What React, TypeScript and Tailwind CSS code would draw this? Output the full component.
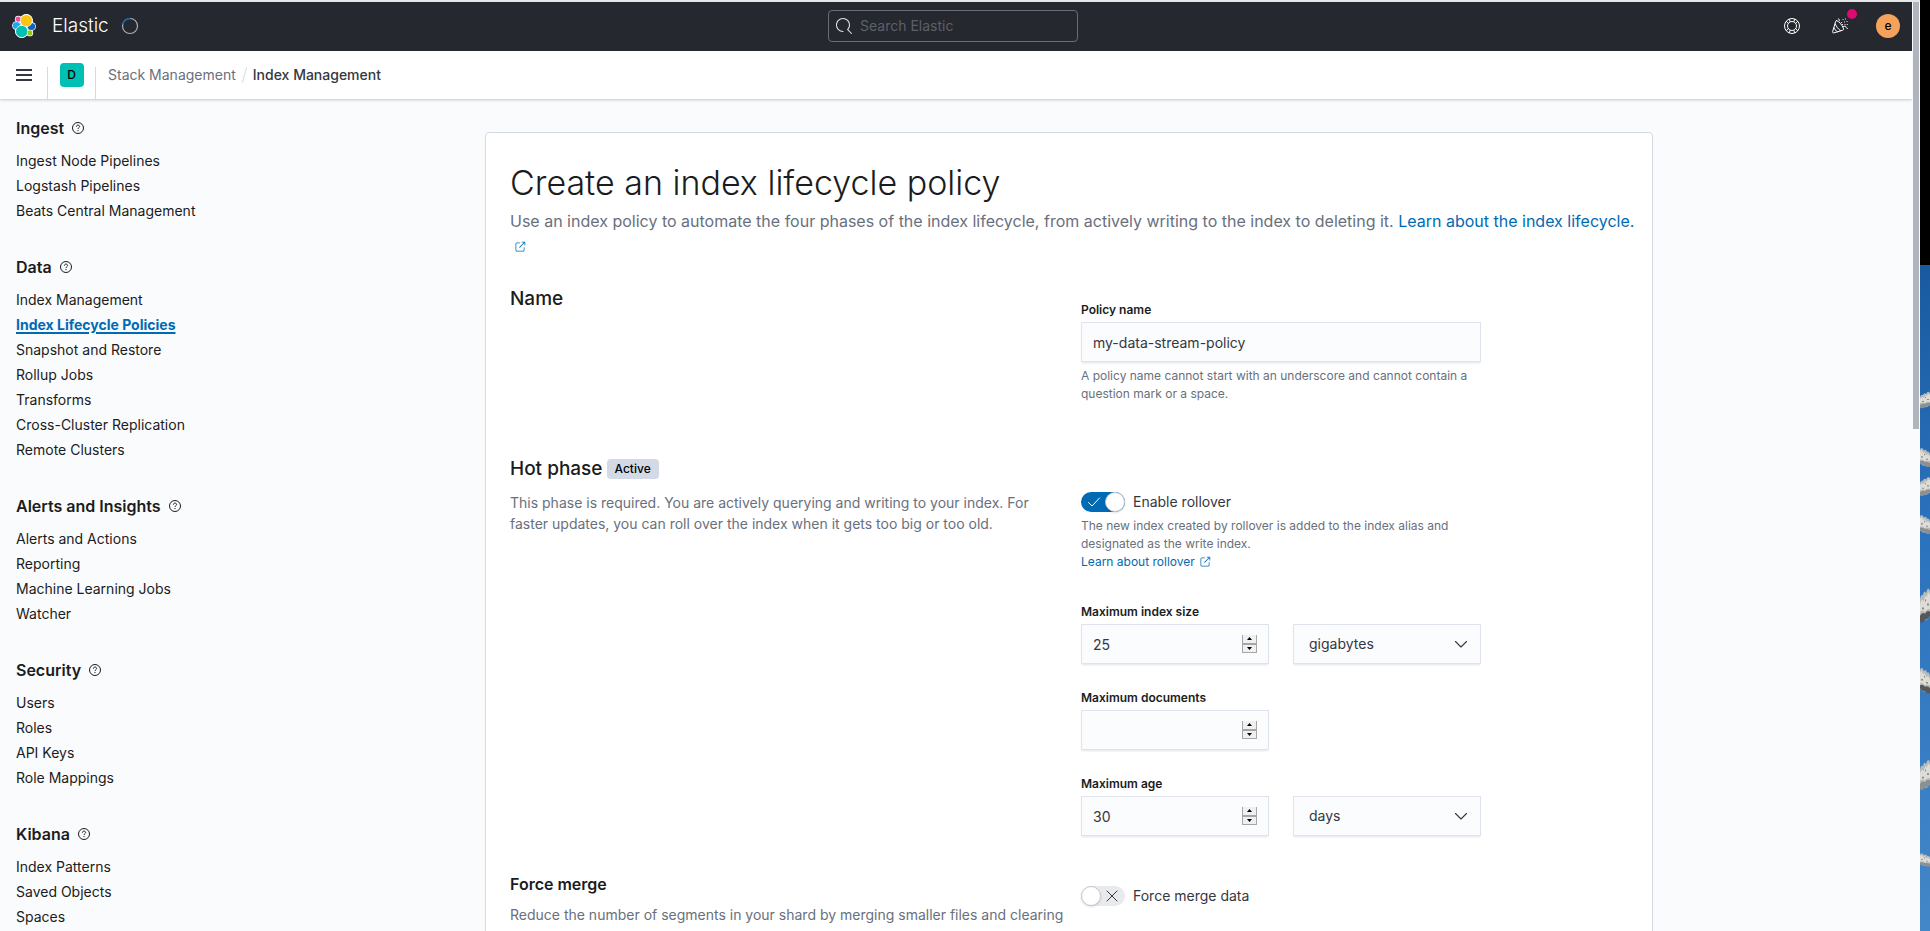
import React, { useId, useState } from 'react';

const NAV: { title: string; items: string[] }[] = [
  { title: 'Ingest', items: ['Ingest Node Pipelines', 'Logstash Pipelines', 'Beats Central Management'] },
  {
    title: 'Data',
    items: [
      'Index Management',
      'Index Lifecycle Policies',
      'Snapshot and Restore',
      'Rollup Jobs',
      'Transforms',
      'Cross-Cluster Replication',
      'Remote Clusters',
    ],
  },
  { title: 'Alerts and Insights', items: ['Alerts and Actions', 'Reporting', 'Machine Learning Jobs', 'Watcher'] },
  { title: 'Security', items: ['Users', 'Roles', 'API Keys', 'Role Mappings'] },
  { title: 'Kibana', items: ['Index Patterns', 'Saved Objects', 'Spaces'] },
];
const SELECTED = 'Index Lifecycle Policies';

function ElasticLogo() {
  return (
    <svg width="24" height="24" viewBox="0 0 24 24" aria-hidden="true">
      <g fill="#fff">
        <circle cx="14.3" cy="6.7" r="6.7" />
        <circle cx="9.7" cy="17.3" r="6.7" />
        <circle cx="6.3" cy="5.2" r="3.4" />
        <circle cx="4.5" cy="11.6" r="4.4" />
        <circle cx="19.5" cy="12.4" r="4.4" />
        <circle cx="17.8" cy="18.9" r="3.4" />
      </g>
      <circle cx="6.2" cy="5.1" r="2.6" fill="#f04e98" />
      <ellipse cx="4.5" cy="11.6" rx="3.7" ry="3.5" fill="#1ba9f5" />
      <ellipse cx="19.5" cy="12.4" rx="3.7" ry="3.5" fill="#0b64c0" />
      <circle cx="17.8" cy="18.9" r="2.6" fill="#93c90e" />
      <circle cx="14.3" cy="6.6" r="6.3" fill="#fff" />
      <circle cx="9.7" cy="17.4" r="6.3" fill="#fff" />
      <circle cx="14.3" cy="6.6" r="5.7" fill="#fec514" />
      <circle cx="9.7" cy="17.4" r="5.7" fill="#00bfb3" />
    </svg>
  );
}

function SearchIcon() {
  return (
    <svg width="16" height="16" viewBox="0 0 16 16" fill="#dfe5ef" aria-hidden="true">
      <path d="M11.271 11.978l3.872 3.873a.502.502 0 00.708 0 .502.502 0 000-.708l-3.565-3.564c2.38-2.747 2.267-6.923-.342-9.532-2.73-2.73-7.17-2.73-9.898 0-2.728 2.729-2.728 7.17 0 9.9a6.955 6.955 0 004.949 2.05.5.5 0 000-1 5.96 5.96 0 01-4.242-1.757 6.01 6.01 0 010-8.486 6.004 6.004 0 018.484 0 6.01 6.01 0 010 8.486.5.5 0 00.034.738z" />
    </svg>
  );
}

function HelpIcon() {
  return (
    <svg width="16" height="16" viewBox="0 0 16 16" fill="none" stroke="#fff" aria-hidden="true">
      <circle cx="8" cy="8" r="7.5" />
      <circle cx="8" cy="8" r="4.5" />
      <path d="M5.2 1.1 6.2 3.8M2.2 3.2 4.2 5.3M10.8 1.1 9.8 3.8M13.8 3.2 11.8 5.3M5.2 14.9 6.2 12.2M2.2 12.8 4.2 10.7M10.8 14.9 9.8 12.2M13.8 12.8 11.8 10.7" />
    </svg>
  );
}

function CheerIcon() {
  return (
    <svg width="16" height="16" viewBox="0 0 16 16" fill="none" stroke="#fff" strokeLinecap="round" strokeLinejoin="round" aria-hidden="true">
      <path d="M4.6 2.6c-.6 0-.8.3-.9.7L.6 13.7c-.2.8.4 1.4 1.2 1.2l9-2.7c1-.3 1.1-1 .5-2.2-1.5-3.3-4.2-6.8-6.7-7.4z" />
      <path d="M3.3 6c1.2 2.8 2.8 5.2 5.2 6.7M2.1 9.8c.7 1.7 1.8 3.2 3.2 4.1" />
      <path d="M6.3.8c1 .3 1.3 1 1 2M11.500 8.500c1.200-.7 2.500-.4 2.700.7.100.8.6 1.300 1.300 1.300" />
      <path d="M9.500 4.500l.1 0M11 1.500l.1 0M13.500 1l.1 0M12.500 4l.1 0M15 3.500l.1 0M10.500 6.500l.1 0M13 6.500l.1 0M15.200 6.500l.1 0" />
    </svg>
  );
}

function QuestionIcon() {
  return (
    <svg width="12" height="12" viewBox="0 0 12 12" fill="none" stroke="#1a1c21" aria-hidden="true">
      <circle cx="6" cy="6" r="5.5" />
      <path d="M4.400 4.700c0-1 .7-1.600 1.600-1.600s1.600.6 1.600 1.400c0 1.200-1.600 1.200-1.600 2.500" />
      <circle cx="6" cy="8.700" r=".35" fill="#1a1c21" strokeWidth="0.5" />
    </svg>
  );
}

function PopoutIcon() {
  return (
    <svg className="ml-1 inline-block align-[-2px]" width="12" height="12" viewBox="0 0 16 16" fill="#006bb4" role="img" aria-label="External link">
      <path d="M13 8.500a.5.5 0 111 0V12a2 2 0 01-2 2H4a2 2 0 01-2-2V4a2 2 0 012-2h3.500a.5.5 0 010 1H4a1 1 0 00-1 1v8a1 1 0 001 1h8a1 1 0 001-1V8.500zm-5.120.339a.5.5 0 11-.706-.707L13.305 2H10.500a.5.5 0 110-1H14a1 1 0 011 1v3.500a.5.5 0 11-1 0V2.720L7.880 8.838z" />
    </svg>
  );
}

function TopBar() {
  return (
    <header className="flex h-[49px] shrink-0 items-center bg-[#25282f] px-3 pb-px">
      <div className="flex flex-1 items-center">
        <a href="#home" className="flex items-center gap-4 text-[19px] font-light text-white">
          <ElasticLogo />
          Elastic
        </a>
        <svg className="ml-3" width="18" height="18" viewBox="0 0 18 18" fill="none" aria-label="Loading" role="img">
          <circle cx="9" cy="9" r="7.5" stroke="#a9afba" strokeWidth="1.2" />
          <path d="M1.800 7.500A7.500 7.500 0 0 1 9 1.500" stroke="#0b64a8" strokeWidth="1.4" />
        </svg>
      </div>
      <label className="mr-1.5 flex h-8 w-[250px] items-center gap-2 rounded-sm border border-[#6a6d73] px-[7px]">
        <SearchIcon />
        <input
          type="search"
          aria-label="Search Elastic"
          placeholder="Search Elastic"
          className="min-w-0 flex-1 bg-transparent text-sm text-white outline-none placeholder:text-[#5c6068]"
        />
      </label>
      <div className="flex flex-1 items-center justify-end gap-8">
        <button aria-label="Help">
          <HelpIcon />
        </button>
        <button aria-label="What's new" className="relative">
          <CheerIcon />
          <span className="absolute -top-[9px] left-[15px] size-[10px] rounded-full bg-[#dd0a73]" />
        </button>
        <button aria-label="Account menu" className="-ml-1 flex size-6 items-center justify-center rounded-full bg-[#f5a35c] text-xs font-medium text-black">
          e
        </button>
      </div>
    </header>
  );
}

function BreadcrumbBar() {
  return (
    <div className="z-10 flex h-[49px] shrink-0 border-b border-[#d3dae6] bg-white shadow-[0_2px_2px_-1px_rgba(152,162,179,0.3)]">
      <button aria-label="Toggle primary navigation" className="flex w-[47px] items-center justify-center pl-px">
        <svg width="16" height="12" viewBox="0 0 16 12" fill="#343741" aria-hidden="true">
          <path d="M0 0h16v2H0zM0 5h16v2H0zM0 10h16v2H0z" />
        </svg>
      </button>
      <div className="h-8 w-px self-end bg-[#d3dae6]" />
      <button aria-label="Default space" className="flex w-[47px] items-center justify-center">
        <span className="flex size-6 items-center justify-center rounded bg-[#00bfb3] text-xs font-medium text-black">D</span>
      </button>
      <div className="h-8 w-px self-end bg-[#d3dae6]" />
      <nav aria-label="Breadcrumbs" className="flex items-center pl-3 text-sm">
        <a href="#management" className="text-[#69707d]">
          Stack Management
        </a>
        <span className="mx-2 h-4 w-px rotate-15 bg-[#d3dae6]" />
        <span className="font-medium text-[#343741]">Index Management</span>
      </nav>
    </div>
  );
}

function SideNav() {
  return (
    <nav aria-label="Management" className="flex w-[226px] shrink-0 flex-col gap-8 overflow-hidden pt-4 pl-4">
      {NAV.map((group) => (
        <section key={group.title} className="flex shrink-0 flex-col gap-2">
          <h2 className="flex h-6 items-center gap-2 text-base font-semibold text-[#1a1c21]">
            {group.title}
            <QuestionIcon />
          </h2>
          <ul>
            {group.items.map((item) => (
              <li key={item} className="h-[25px] text-sm leading-[25px] whitespace-nowrap">
                <a
                  href="#nav"
                  aria-current={item === SELECTED ? 'page' : undefined}
                  className={
                    item === SELECTED
                      ? 'font-bold text-[#006bb4] underline decoration-2 underline-offset-2'
                      : 'text-[#1a1c21]'
                  }
                >
                  {item}
                </a>
              </li>
            ))}
          </ul>
        </section>
      ))}
    </nav>
  );
}

const FIELD =
  'h-10 w-full rounded-none border border-[#e0e3ee] bg-[#fbfcfd] text-sm text-[#343741] shadow-[0_2px_2px_-1px_rgba(152,162,179,0.3)] outline-none';

function NumberField({ label, initial, unit, unitLabel }: { label: string; initial: string; unit?: string[]; unitLabel?: string }) {
  const id = useId();
  const [value, setValue] = useState(initial);
  const step = (by: number) => setValue(String(Number(value || 0) + by));
  return (
    <div className="flex flex-col gap-[3px]">
      <label htmlFor={id} className="text-xs leading-[18px] font-semibold text-[#1a1c21]">
        {label}
      </label>
      <div className="grid grid-cols-2 gap-6">
        <div className="relative">
          <input
            id={id}
            type="number"
            value={value}
            onChange={(e) => setValue(e.target.value)}
            className={`${FIELD} px-[11px] [appearance:textfield] [&::-webkit-inner-spin-button]:appearance-none`}
          />
          <div className="absolute top-[11px] right-3 flex h-[18px] w-[15px] flex-col border-x border-b border-[#a6a6a6] bg-[#f0f0f0]">
            <button type="button" aria-label="Increase" tabIndex={-1} onClick={() => step(1)} className="flex flex-1 items-center justify-center border-b border-[#a6a6a6]">
              <svg width="5" height="3" viewBox="0 0 5 3" aria-hidden="true">
                <path d="M0 3 2.500 0 5 3z" />
              </svg>
            </button>
            <button type="button" aria-label="Decrease" tabIndex={-1} onClick={() => step(-1)} className="flex flex-1 items-center justify-center border-t border-[#a6a6a6]">
              <svg width="5" height="3" viewBox="0 0 5 3" aria-hidden="true">
                <path d="M0 0h5L2.500 3z" />
              </svg>
            </button>
          </div>
        </div>
        {unit && (
          <div className="relative">
            <select aria-label={unitLabel} className={`${FIELD} appearance-none px-[15px]`}>
              {unit.map((u) => (
                <option key={u}>{u}</option>
              ))}
            </select>
            <svg className="pointer-events-none absolute top-3 right-3 h-4 w-4" viewBox="0 0 16 16" fill="none" stroke="#343741" strokeWidth="1.1" strokeLinecap="round" strokeLinejoin="round" aria-hidden="true">
              <path d="M2.500 5.500 8 11l5.500-5.500" />
            </svg>
          </div>
        )}
      </div>
    </div>
  );
}

function Toggle({ label, initial }: { label: string; initial: boolean }) {
  const [on, setOn] = useState(initial);
  return (
    <label className="flex h-5 items-center gap-2 text-sm text-[#343741]">
      <input type="checkbox" role="switch" checked={on} onChange={() => setOn(!on)} className="sr-only" />
      {on ? (
        <span className="flex h-5 w-11 items-center justify-between rounded-full bg-[#006bb4] pl-[6px]">
          <svg width="14" height="14" viewBox="0 0 14 14" fill="none" stroke="#fff" strokeLinecap="round" aria-hidden="true">
            <path d="M1.500 7.500 5 11l7.500-8" />
          </svg>
          <span className="size-5 rounded-full border border-[#c5c9d0] bg-white shadow-sm" />
        </span>
      ) : (
        <span className="flex h-5 w-11 items-center justify-between rounded-full bg-[#e9eaed] pr-[7px]">
          <span className="size-5 rounded-full border border-[#c5c9d0] bg-white shadow-sm" />
          <svg width="12" height="12" viewBox="0 0 12 12" fill="none" stroke="#343741" strokeLinecap="round" aria-hidden="true">
            <path d="M1 1l10 10M11 1 1 11" />
          </svg>
        </span>
      )}
      {label}
    </label>
  );
}

function PolicyForm() {
  const nameId = useId();
  return (
    <form className="w-full max-w-[1168px] self-start rounded border border-[#d3dae6] bg-white p-6 shadow-[0_2px_2px_-1px_rgba(152,162,179,0.3)]">
      <h1 className="text-[34px] leading-[52px] font-light text-[#1a1c21]">Create an index lifecycle policy</h1>
      <p className="-mr-2 text-base leading-6 text-[#69707d]">
        Use an index policy to automate the four phases of the index lifecycle, from actively writing to the index to deleting it.{' '}
        <a href="#learn" className="text-[#006bb4]">
          Learn about the index lifecycle. <PopoutIcon />
        </a>
      </p>

      <section className="mt-[26px] grid grid-cols-2 gap-6">
        <h2 className="text-[19px] leading-8 font-medium text-[#1a1c21]">Name</h2>
        <div className="flex max-w-[400px] flex-col pt-[18px]">
          <label htmlFor={nameId} className="mb-[3px] text-xs leading-[18px] font-semibold text-[#1a1c21]">
            Policy name
          </label>
          <input id={nameId} type="text" defaultValue="my-data-stream-policy" className={`${FIELD} px-[11px]`} />
          <p className="mt-[5px] text-xs leading-[18px] text-[#69707d]">
            A policy name cannot start with an underscore and cannot contain a question mark or a space.
          </p>
        </div>
      </section>

      <section className="mt-[50px] grid grid-cols-2 gap-6">
        <div>
          <h2 className="flex h-8 items-center gap-1 text-[19px] font-medium text-[#1a1c21]">
            Hot phase
            <span className="h-5 rounded-sm bg-[#d3dae6] px-2 text-xs leading-5 font-medium text-black">Active</span>
          </h2>
          <p className="-mr-2 mt-[7px] text-sm leading-[21px] text-[#69707d]">
            This phase is required. You are actively querying and writing to your index. For faster updates, you can roll over the index when it
            gets too big or too old.
          </p>
        </div>
        <div className="flex max-w-[400px] flex-col pt-[39px]">
          <Toggle label="Enable rollover" initial={true} />
          <p className="mt-[5px] mb-8 text-xs leading-[18px] text-[#69707d]">
            The new index created by rollover is added to the index alias and designated as the write index.
            <br />
            <a href="#rollover" className="text-[#006bb4]">
              Learn about rollover
              <PopoutIcon />
            </a>
          </p>
          <div className="flex flex-col gap-[25px]">
            <NumberField label="Maximum index size" initial="25" unit={['gigabytes', 'megabytes', 'bytes']} unitLabel="Size units" />
            <NumberField label="Maximum documents" initial="" />
            <NumberField label="Maximum age" initial="30" unit={['days', 'hours', 'minutes']} unitLabel="Age units" />
          </div>
        </div>
      </section>

      <section className="mt-9 grid grid-cols-2 gap-6">
        <div>
          <h3 className="text-base leading-6 font-semibold text-[#1a1c21]">Force merge</h3>
          <p className="-mr-2 mt-2 text-sm leading-[21px] text-[#69707d]">
            Reduce the number of segments in your shard by merging smaller files and clearing
          </p>
        </div>
        <div className="pt-[14px]">
          <Toggle label="Force merge data" initial={false} />
        </div>
      </section>
    </form>
  );
}

const CLOUDS = [
  { y: 125, h: 20, dark: false },
  { y: 181, h: 23, dark: false },
  { y: 210, h: 23, dark: false },
  { y: 248, h: 23, dark: false },
  { y: 320, h: 41, dark: true },
  { y: 400, h: 31, dark: true },
  { y: 492, h: 36, dark: false },
  { y: 587, h: 16, dark: false },
];

function DesktopStrip() {
  return (
    <div aria-hidden="true" className="flex w-[10px] shrink-0 flex-col bg-black pt-[265px]">
      <svg className="min-h-0 w-full flex-1" viewBox="0 0 10 666" preserveAspectRatio="none">
        <defs>
          <linearGradient id="sky" x1="0" y1="0" x2="0" y2="1">
            <stop offset="0" stopColor="#195a9f" />
            <stop offset="0.4" stopColor="#2b72bd" />
            <stop offset="1" stopColor="#4387c8" />
          </linearGradient>
        </defs>
        <rect width="10" height="666" fill="url(#sky)" />
        {CLOUDS.map(({ y, h, dark }, i) => (
          <g key={y} transform={`translate(${i % 2 ? 0 : 10} ${y}) scale(${i % 2 ? 1 : -1} ${h / 20})`}>
            <path d="M0 3Q2 0 4 4Q6 2 7 5Q9 4 10 7V17Q8 19 6 17Q3 18 0 15z" fill="#b9bbba" />
            <path d="M0 5Q2 2 3 6Q5 4 6 8Q8 6 10 9V13Q7 12 5 13Q2 11 0 12z" fill="#dcdcd8" />
            <path d="M0 13Q3 12 5 14Q8 13 10 15V18Q7 19 5 17Q2 17 0 15z" fill={dark ? '#55575a' : '#8d9092'} />
            <path d="M1 9h2v1H1zM6 11h2v1H6zM4 7h1v1H4z" fill="#8f8b80" />
          </g>
        ))}
      </svg>
    </div>
  );
}

export default function App() {
  return (
    <div className="flex h-screen overflow-hidden bg-[#fafbfd] font-['Inter','Liberation_Sans',sans-serif]">
      <div className="flex min-w-0 flex-1 flex-col border-t-2 border-[#e4e6e8]">
        <div className="flex min-h-0 flex-1">
          <div className="flex min-w-0 flex-1 flex-col">
            <TopBar />
            <BreadcrumbBar />
            <div className="flex min-h-0 flex-1 overflow-hidden">
              <SideNav />
              <main className="flex min-w-0 flex-1 justify-center pt-8">
                <PolicyForm />
              </main>
            </div>
          </div>
          <div aria-hidden="true" className="w-2 shrink-0 px-px">
            <div className="h-[46%] bg-[#b0b5bd]" />
          </div>
        </div>
      </div>
      <DesktopStrip />
    </div>
  );
}
